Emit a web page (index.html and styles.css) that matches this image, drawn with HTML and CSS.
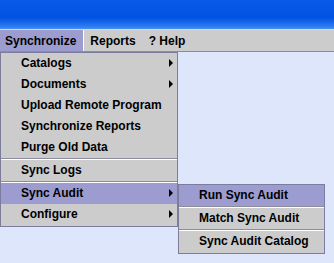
FILE: index.html
```html
<!DOCTYPE html>
<html lang="en">
<head>
    <meta charset="UTF-8">
    <title>Synchronize</title>
    <link rel="stylesheet" href="styles.css">
</head>
<body>
    <div class="window">
        <div class="titlebar"></div>
        <div class="menubar">
            <div class="menubar-item active">Synchronize</div>
            <div class="menubar-item">Reports</div>
            <div class="menubar-item">? Help</div>
        </div>
        <div class="desktop">
            <div class="menu main-menu">
                <div class="menu-item has-sub">Catalogs</div>
                <div class="menu-item has-sub">Documents</div>
                <div class="menu-item">Upload Remote Program</div>
                <div class="menu-item">Synchronize Reports</div>
                <div class="menu-item">Purge Old Data</div>
                <div class="separator"></div>
                <div class="menu-item">Sync Logs</div>
                <div class="separator"></div>
                <div class="menu-item has-sub selected">Sync Audit</div>
                <div class="menu-item has-sub">Configure</div>
            </div>
            <div class="menu sub-menu">
                <div class="menu-item selected">Run Sync Audit</div>
                <div class="separator"></div>
                <div class="menu-item">Match Sync Audit</div>
                <div class="separator"></div>
                <div class="menu-item">Sync Audit Catalog</div>
            </div>
        </div>
    </div>
</body>
</html>
```
FILE: styles.css
```css
body {
    margin: 0;
    font-family: 'Liberation Sans', Arial, sans-serif;
    font-size: 12px;
    font-weight: bold;
    color: #000;
}
.window {
    width: 334px;
    height: 263px;
    display: flex;
    flex-direction: column;
    overflow: hidden;
}
.titlebar {
    height: 29px;
    background: linear-gradient(#0a5ae8 0%, #0052e2 60%, #2a78f0 90%, #4a90f0 100%);
}
.menubar {
    height: 21px;
    display: flex;
    align-items: stretch;
    background-color: #cccccc;
    border-top: 1px solid #d8d8ec;
    border-bottom: 1px solid #8c8c9c;
}
.menubar-item {
    display: flex;
    align-items: center;
    padding: 0 7px 0 6px;
}
.menubar-item.active {
    background-color: #9c9cd0;
    border-right: 1px solid #fff;
    padding-left: 5px;
}
.desktop {
    flex: 1;
    position: relative;
    background-color: #dde6fb;
}
.menu {
    position: absolute;
    background-color: #cccccc;
    border: 1px solid #7c7c9c;
    display: flex;
    flex-direction: column;
}
.main-menu {
    left: 0;
    top: 0;
    width: 176px;
    padding: 0 0 1px;
}
.sub-menu {
    left: 178px;
    top: 132px;
    width: 145px;
    padding: 0 0 1px;
}
.menu-item {
    height: 21px;
    line-height: 21px;
    padding-left: 20px;
    position: relative;
    white-space: nowrap;
}
.menu-item.selected {
    background-color: #9c9cd0;
}
.has-sub::after {
    content: "";
    position: absolute;
    right: 4px;
    top: 6px;
    border-left: 4px solid #000;
    border-top: 4px solid transparent;
    border-bottom: 4px solid transparent;
}
.separator {
    height: 1px;
    background-color: #8c8c9c;
    border-bottom: 1px solid #fff;
}
```
